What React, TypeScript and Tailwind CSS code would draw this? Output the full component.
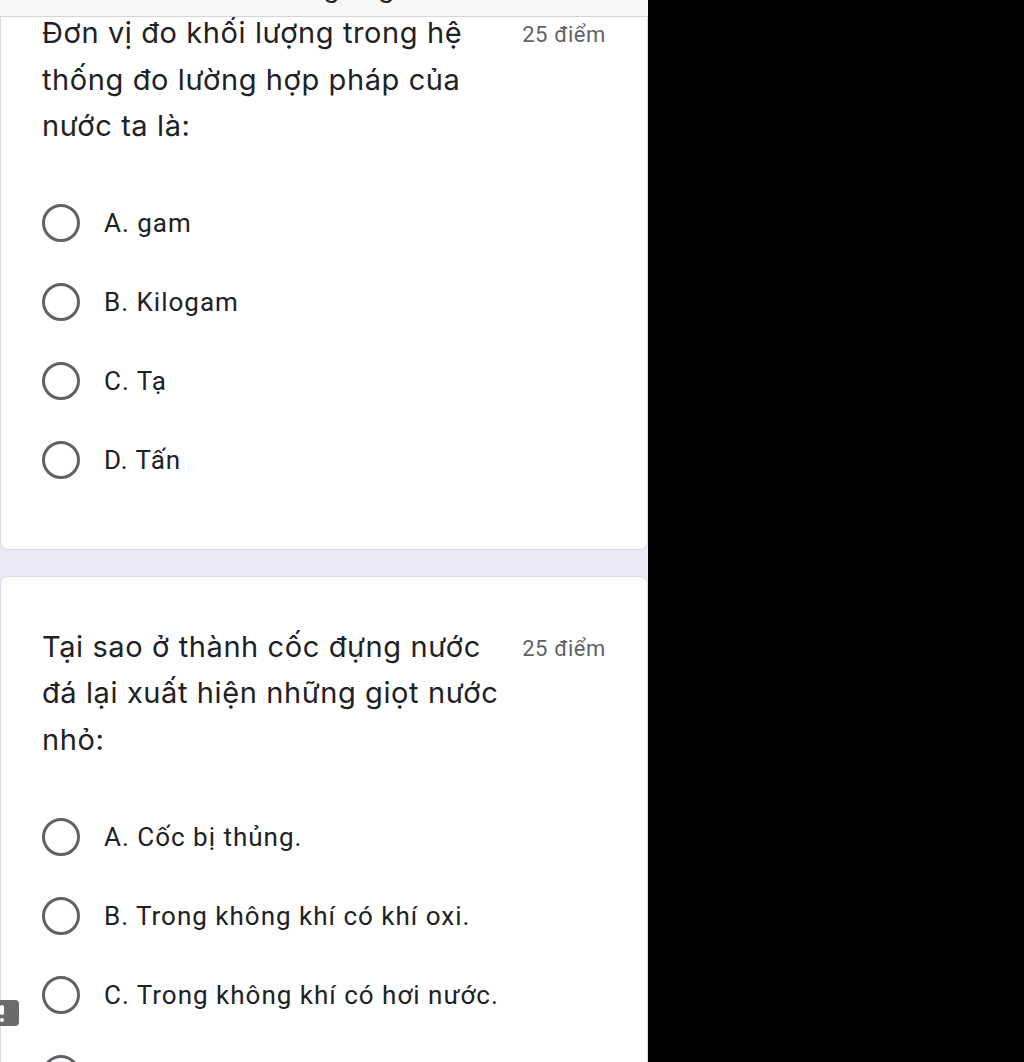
import React from 'react';

type Question = {
  title: string;
  options: string[];
};

const questions: Question[] = [
  {
    title: 'Đơn vị đo khối lượng trong hệ thống đo lường hợp pháp của nước ta là:',
    options: ['A. gam', 'B. Kilogam', 'C. Tạ', 'D. Tấn'],
  },
  {
    title: 'Tại sao ở thành cốc đựng nước đá lại xuất hiện những giọt nước nhỏ:',
    options: [
      'A. Cốc bị thủng.',
      'B. Trong không khí có khí oxi.',
      'C. Trong không khí có hơi nước.',
      'D. Trong không khí có khí nitơ.',
    ],
  },
];

function Radio() {
  return <span className="block w-[38px] h-[38px] shrink-0 rounded-full border-[3px] border-[#5f6368]" />;
}

function QuestionCard({ q, first }: { q: Question; first?: boolean }) {
  return (
    <section
      className={`bg-white border border-[#dadce0] rounded-lg px-[41px] ${first ? 'pt-[10px] pb-[49px] rounded-t-none border-t-0' : 'pt-[47px] pb-10'}`}
    >
      {/* Title + points */}
      <div className="flex items-start justify-between">
        <h2 className="w-[468px] text-[29px] leading-[46.5px] text-[#202124] font-normal [font-family:Inter,sans-serif] tracking-[0.6px]">
          {q.title}
        </h2>
        <span className="mt-[10px] text-[22px] leading-[30px] text-[#5f6368] [font-family:Roboto,sans-serif] tracking-[0.6px]">
          25 điểm
        </span>
      </div>

      {/* Options */}
      <div className="mt-[34px] flex flex-col">
        {q.options.map((opt) => (
          <label key={opt} className="h-[79px] flex items-center gap-[24px]">
            <Radio />
            <span className="text-[26px] leading-none text-[#202124] [font-family:Roboto,sans-serif] tracking-[1px]">
              {opt}
            </span>
          </label>
        ))}
      </div>
    </section>
  );
}

export default function App() {
  return (
    <main className="w-[1024px] h-[1062px] bg-black flex overflow-hidden">
      <div className="relative w-[648px] h-full bg-[#ece9f6] overflow-hidden">
        {/* Sticky header strip */}
        <div className="absolute top-0 left-0 right-0 h-[17px] bg-[#f8f8f8] border-b border-[#d6d6d6] overflow-hidden flex flex-col justify-end items-center z-10">
          <span className="text-[26px] leading-[30px] mb-[13px] text-[#202124] [font-family:Inter,sans-serif] pl-[20px]">
            Dùng ứng
          </span>
        </div>

        <div className="flex flex-col gap-[26px]">
          <QuestionCard q={questions[0]} first />
          <QuestionCard q={questions[1]} />
        </div>

        {/* Floating report button, cut off at the edge */}
        <div className="absolute left-[-8px] top-[1000px] w-[27px] h-[26px] rounded-[4px] bg-[#6b6b6b] flex flex-col items-center justify-center gap-[3px]">
          <span className="block w-[4px] h-[10px] bg-white rounded-sm translate-x-[-4px]" />
          <span className="block w-[4px] h-[4px] bg-white rounded-sm translate-x-[-4px]" />
        </div>
      </div>
    </main>
  );
}
